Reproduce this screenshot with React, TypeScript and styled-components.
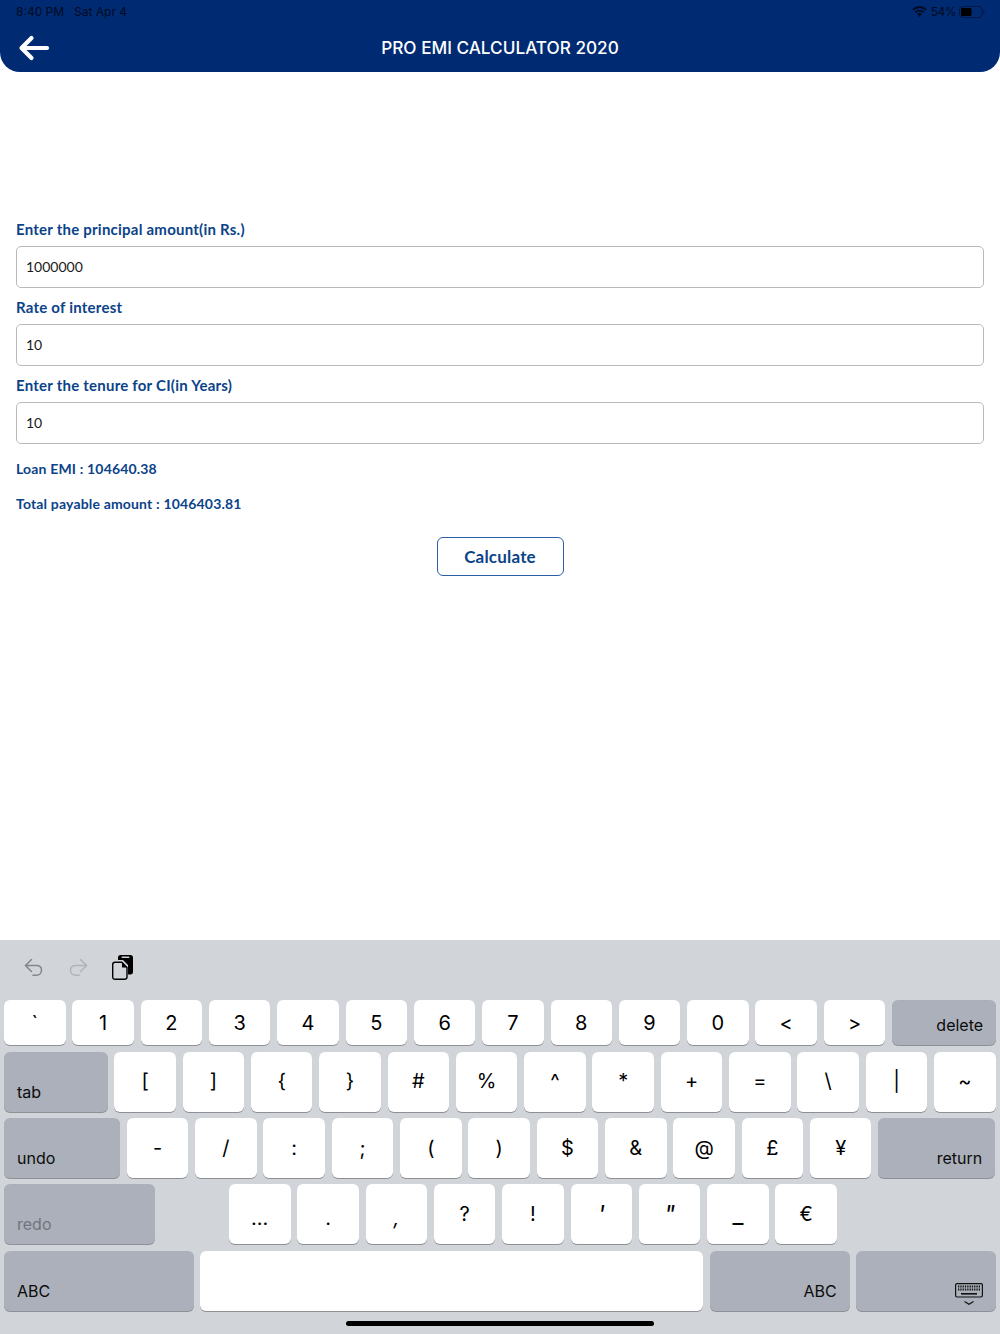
import React from "react";
import styled, { createGlobalStyle } from "styled-components";

const Global = createGlobalStyle`
  html, body { margin: 0; padding: 0; background: #fff; }
  * { box-sizing: border-box; }
`;

const Page = styled.div`
  width: 1000px;
  height: 1334px;
  display: flex;
  flex-direction: column;
  overflow: hidden;
  background: #fff;
`;

const Header = styled.header`
  height: 72px;
  background: #002b73;
  border-radius: 0 0 20px 20px;
  padding: 0 15px 0 16px;
  flex: none;
`;

const StatusBar = styled.div`
  height: 24px;
  padding-bottom: 1px;
  display: flex;
  align-items: center;
  font: 12px "Inter", "Liberation Sans", sans-serif;
  color: #000a22;
`;

const StatusDate = styled.span`
  margin-left: 10px;
  flex: 1;
`;

const BatteryPct = styled.span`
  margin: 0 3px 0 4px;
  letter-spacing: -0.5px;
`;

const NavBar = styled.div`
  height: 48px;
  display: flex;
  align-items: center;
`;

const BackButton = styled.div`
  margin-left: 2px;
  width: 32px;
  height: 26px;
  flex: none;
`;

const Title = styled.h1`
  flex: 1;
  margin: 0;
  padding: 0 35px 1px 0;
  text-align: center;
  font: 500 17.2px "Inter", "Liberation Sans", sans-serif;
  color: #fff;
`;

const Form = styled.main`
  padding: 147px 16px 0;
  display: flex;
  flex-direction: column;
`;

const FieldLabel = styled.label`
  height: 20px;
  font: 700 15px/20px "Lato", "Open Sans", sans-serif;
  color: #0b4389;
  letter-spacing: 0.23px;
`;

const Input = styled.div`
  height: 42px;
  margin: 7px 0 9px;
  padding: 0 9px 1px;
  display: flex;
  align-items: center;
  border: 1px solid #b9b9b9;
  border-radius: 5px;
  font: 400 14px "Lato", "Open Sans", sans-serif;
  color: #1a1a1a;
`;

const Result = styled.div<{ $top: number }>`
  margin-top: ${(p) => p.$top}px;
  height: 20px;
  font: 700 14px/20px "Lato", "Open Sans", sans-serif;
  letter-spacing: 0.17px;
  color: #0b4389;
`;

const CalcButton = styled.button`
  align-self: center;
  width: 127px;
  height: 39px;
  margin-top: 23px;
  background: #fff;
  border: 1.3px solid #2b5fa5;
  border-radius: 6px;
  font: 700 17px "Lato", "Open Sans", sans-serif;
  letter-spacing: 0.2px;
  color: #0b4389;
`;

const Keyboard = styled.section`
  margin-top: auto;
  height: 394px;
  background: #d1d4d9;
  display: flex;
  flex-direction: column;
  flex: none;
  position: relative;
`;

const Toolbar = styled.div`
  height: 60px;
  padding: 15px 0 20px 24px;
  display: flex;
  align-items: center;
  gap: 24px;
`;

const KeyRow = styled.div<{ $h?: number; $mb?: number }>`
  height: ${(p) => p.$h ?? 60}px;
  margin: 0 4px ${(p) => p.$mb ?? 6.4}px;
  display: flex;
  gap: 6.8px;
`;

const Key = styled.div<{ $dy?: number; $size?: number; $slant?: boolean }>`
  width: 61.53px;
  height: 100%;
  flex: none;
  background: #fff;
  border-radius: 6px;
  box-shadow: 0 1px 0 #8e9095;
  display: flex;
  align-items: center;
  justify-content: center;
  padding: ${(p) => Math.max(p.$dy ?? 0, 0) * 2}px 0 ${(p) => Math.max(-(p.$dy ?? 0), 0) * 2}px;
  font: ${(p) => (p.$slant ? "italic" : "normal")} 400 ${(p) => p.$size ?? 20}px "Inter", "Liberation Sans", sans-serif;
  color: #000;
`;

const ActionKey = styled.div<{ $w: number; $right?: boolean; $muted?: boolean }>`
  width: ${(p) => p.$w}px;
  height: 100%;
  flex: none;
  background: #abb0ba;
  border-radius: 6px;
  box-shadow: 0 1px 0 #8e9095;
  display: flex;
  align-items: flex-end;
  justify-content: ${(p) => (p.$right ? "flex-end" : "flex-start")};
  padding: 0 13px 10px;
  font: 400 16px "Inter", "Liberation Sans", sans-serif;
  color: ${(p) => (p.$muted ? "#71757d" : "#0c0c0c")};
`;

const SpaceKey = styled.div`
  width: 503px;
  height: 100%;
  flex: none;
  background: #fff;
  border-radius: 6px;
  box-shadow: 0 1px 0 #8e9095;
`;

const Spacer = styled.div<{ $w: number }>`
  width: ${(p) => p.$w}px;
  flex: none;
`;

const KbdIconKey = styled(ActionKey)`
  padding: 0 13px 4px;
`;

const HomeIndicator = styled.div`
  position: absolute;
  left: 346px;
  bottom: 8px;
  width: 308px;
  height: 5px;
  border-radius: 3px;
  background: #000;
`;

const Wifi = () => (
  <svg width="15" height="11" viewBox="0 0 15 11" fill="none" stroke="#000a22" strokeWidth="1.8">
    <path d="M1 3.8C5 .4 10 .4 14 3.8" />
    <path d="M3.3 6.2c2.6-2 5.8-2 8.4 0" />
    <path d="M5.6 8.4c1.2-.8 2.6-.8 3.8 0" />
    <circle cx="7.5" cy="9.8" r="1" fill="#000a22" stroke="none" />
  </svg>
);

const Battery = () => (
  <svg width="26" height="12" viewBox="0 0 26 12">
    <rect x=".5" y=".5" width="22.5" height="11" rx="3" fill="none" stroke="#000a22" strokeOpacity=".55" />
    <rect x="2" y="2" width="10.5" height="8" rx="1.3" fill="#000" />
    <path d="M24.3 4v4c.8-.3 1.2-1.1 1.2-2s-.4-1.7-1.2-2z" fill="#000a22" fillOpacity=".6" />
  </svg>
);

const BackArrow = () => (
  <svg width="32" height="26" viewBox="0 0 32 26" fill="none" stroke="#fff" strokeWidth="4.2" strokeLinecap="round" strokeLinejoin="round">
    <path d="M29 13H4" />
    <path d="M13.5 3 3.5 13l10 10" />
  </svg>
);

const Undo = ({ color }: { color: string }) => (
  <svg width="20" height="20" viewBox="0 0 20 20" fill="none" stroke={color} strokeWidth="1.5" strokeLinecap="round" strokeLinejoin="round">
    <path d="M7.5 1.5 1.5 7.5l6 6" />
    <path d="M1.5 7.5h11c3 0 5 2 5 4.8s-2 5-5 5H9" />
  </svg>
);

const Redo = ({ color }: { color: string }) => (
  <svg width="20" height="20" viewBox="0 0 20 20" fill="none" stroke={color} strokeWidth="1.5" strokeLinecap="round" strokeLinejoin="round">
    <path d="M12.5 1.5l6 6-6 6" />
    <path d="M18.5 7.5h-11c-3 0-5 2-5 4.8s2 5 5 5H11" />
  </svg>
);

const Paste = () => (
  <svg width="21" height="25" viewBox="0 0 21 25">
    <path d="M6 2.5C6 1.1 7 0 8.5 0h10C20 0 21 1.1 21 2.5V17c0 1.5-1 2.5-2.5 2.5H16V10L11 5H6z" fill="#000" />
    <rect x="9.5" y="1.6" width="8" height="1.4" rx=".7" fill="#d1d4d9" />
    <path d="M3 7.3h6.8l5.2 5.2V22c0 1.6-1 2.3-2.6 2.3H3.2C1.600 24.3.7 23.6.7 22V9.6c0-1.4.9-2.3 2.3-2.3z" fill="#d1d4d9" stroke="#000" strokeWidth="1.4" />
    <path d="M10 7.6v5h5z" fill="#000" />
  </svg>
);

const KbdIcon = () => (
  <svg width="28" height="24" viewBox="0 0 28 24" fill="none">
    <rect x=".6" y=".6" width="26.8" height="13.4" rx="1.4" stroke="#111" strokeWidth="1.2" />
    <path d="M3 3.6h22M3 6.6h22" stroke="#111" strokeWidth="2" strokeDasharray="1.3 1" />
    <path d="M6 10.8h16" stroke="#111" strokeWidth="1.6" />
    <path d="M9.5 18.5l4.5 2.8 4.5-2.8" stroke="#111" strokeWidth="1.1" />
  </svg>
);

const row1 = ["`", "1", "2", "3", "4", "5", "6", "7", "8", "9", "0", "<", ">"];
const row2 = ["[", "]", "{", "}", "#", "%", "^", "*", "+", "=", "\\", "|", "~"];
const row3 = ["-", "/", ":", ";", "(", ")", "$", "&", "@", "£", "¥"];
const row4: { c: string; dy?: number; size?: number; slant?: boolean }[] = [
  { c: "…", dy: 4 },
  { c: ".", dy: 4 },
  { c: ",", dy: 4, slant: true },
  { c: "?" },
  { c: "!" },
  { c: "'", slant: true, size: 24 },
  { c: "\"", slant: true, size: 24 },
  { c: "_", size: 24 },
  { c: "€" },
];

export default function App() {
  return (
    <Page>
      <Global />
      <Header>
        <StatusBar>
          <span>8:40 PM</span>
          <StatusDate>Sat Apr 4</StatusDate>
          <Wifi />
          <BatteryPct>54%</BatteryPct>
          <Battery />
        </StatusBar>
        <NavBar>
          <BackButton>
            <BackArrow />
          </BackButton>
          <Title>PRO EMI CALCULATOR 2020</Title>
        </NavBar>
      </Header>
      <Form>
        <FieldLabel>Enter the principal amount(in Rs.)</FieldLabel>
        <Input>1000000</Input>
        <FieldLabel>Rate of interest</FieldLabel>
        <Input>10</Input>
        <FieldLabel>Enter the tenure for CI(in Years)</FieldLabel>
        <Input>10</Input>
        <Result $top={6}>Loan EMI : 104640.38</Result>
        <Result $top={15}>Total payable amount : 1046403.81</Result>
        <CalcButton>Calculate</CalcButton>
      </Form>
      <Keyboard>
        <Toolbar>
          <Undo color="#83868c" />
          <Redo color="#b0b3b9" />
          <Paste />
        </Toolbar>
        <KeyRow $h={45} $mb={6.5}>
          {row1.map((k) => (
            <Key key={k}>{k}</Key>
          ))}
          <ActionKey $w={104} $right>
            delete
          </ActionKey>
        </KeyRow>
        <KeyRow>
          <ActionKey $w={103.5}>tab</ActionKey>
          {row2.map((k) => (
            <Key key={k} $dy={-1}>
              {k}
            </Key>
          ))}
        </KeyRow>
        <KeyRow>
          <ActionKey $w={116}>undo</ActionKey>
          {row3.map((k) => (
            <Key key={k}>{k}</Key>
          ))}
          <ActionKey $w={117} $right>
            return
          </ActionKey>
        </KeyRow>
        <KeyRow>
          <ActionKey $w={151} $muted>
            redo
          </ActionKey>
          <Spacer $w={60.4} />
          {row4.map((k) => (
            <Key key={k.c} $dy={k.dy} $size={k.size} $slant={k.slant}>
              {k.c}
            </Key>
          ))}
        </KeyRow>
        <KeyRow $mb={0}>
          <ActionKey $w={189.5}>ABC</ActionKey>
          <SpaceKey />
          <ActionKey $w={139.5} $right>
            ABC
          </ActionKey>
          <KbdIconKey $w={140} $right>
            <KbdIcon />
          </KbdIconKey>
        </KeyRow>
        <HomeIndicator />
      </Keyboard>
    </Page>
  );
}
